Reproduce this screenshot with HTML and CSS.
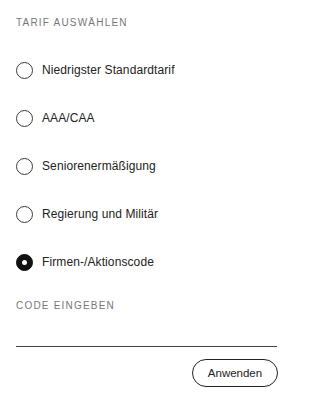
FILE: index.html
```html
<!DOCTYPE html>
<html lang="de">
<head>
<meta charset="utf-8">
<link rel="stylesheet" href="styles.css">
</head>
<body>
<div class="panel">
  <div class="heading">TARIF AUSWÄHLEN</div>
  <div class="options">
    <label class="option"><span class="radio"></span><span class="label">Niedrigster Standardtarif</span></label>
    <label class="option"><span class="radio"></span><span class="label">AAA/CAA</span></label>
    <label class="option"><span class="radio"></span><span class="label">Seniorenermäßigung</span></label>
    <label class="option"><span class="radio"></span><span class="label">Regierung und Militär</span></label>
    <label class="option"><span class="radio checked"></span><span class="label">Firmen-/Aktionscode</span></label>
  </div>
  <div class="heading code-heading">CODE EINGEBEN</div>
  <div class="field"></div>
  <div class="actions"><span class="btn">Anwenden</span></div>
</div>
</body>
</html>
```
FILE: styles.css
```css
html, body {
  margin: 0;
  padding: 0;
  background: #fff;
}
body {
  font-family: "Liberation Sans", Arial, sans-serif;
  color: #222;
}
.panel {
  box-sizing: border-box;
  width: 293px;
  padding: 16px 16px 0 16px;
}
.heading {
  font-size: 10px;
  line-height: 14px;
  letter-spacing: 1.2px;
  color: #777;
}
.options {
  margin-top: 16px;
  display: flex;
  flex-direction: column;
}
.option {
  height: 48px;
  display: flex;
  align-items: center;
}
.radio {
  box-sizing: border-box;
  width: 17px;
  height: 17px;
  border: 1.3px solid #3a3a3a;
  border-radius: 50%;
  margin-right: 9px;
  display: flex;
  align-items: center;
  justify-content: center;
  flex-shrink: 0;
}
.radio.checked {
  background: #111;
  border-color: #111;
}
.radio.checked::after {
  content: "";
  width: 5px;
  height: 5px;
  border-radius: 50%;
  background: #fff;
}
.label {
  font-size: 12px;
  letter-spacing: 0.1px;
  color: #222;
}
.code-heading {
  margin-top: 13px;
}
.field {
  height: 33px;
  border-bottom: 1px solid #444;
}
.actions {
  margin-top: 12px;
  display: flex;
  justify-content: flex-end;
  margin-right: -1px;
}
.btn {
  box-sizing: border-box;
  width: 86px;
  height: 28px;
  border: 1px solid #222;
  border-radius: 14px;
  display: flex;
  align-items: center;
  justify-content: center;
  font-size: 11.5px;
  color: #222;
}
```
